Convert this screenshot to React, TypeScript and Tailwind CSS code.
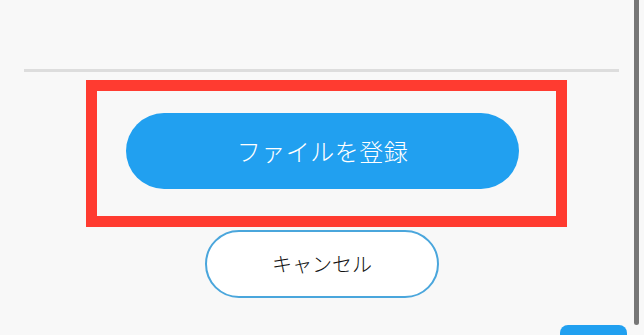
export default function App() {
  return (
    <div
      className="relative w-[644px] h-[335px] overflow-hidden bg-[#f8f8f8]"
      style={{ fontFamily: '"Noto Sans CJK JP", "Noto Sans", sans-serif' }}
    >
      <div className="flex flex-col pt-[69px]">
        <div className="ml-[24px] w-[595px] h-[3px] bg-[#dddddd]" />

        <div className="mt-[8px] ml-[86px] w-[481px] h-[147px] border-[11px] border-[#ff3b30] flex justify-center pt-[22px]">
          <button className="ml-[-8px] w-[393px] h-[76px] rounded-full bg-[#21a0f0] text-white text-[24px] font-light tracking-[0.5px] flex items-center justify-center">
            ファイルを登録
          </button>
        </div>

        <div className="mt-[3px] flex justify-center">
          <button className="w-[234px] h-[68px] rounded-full bg-white border-2 border-[#4aa6dc] text-[#111111] text-[20px] font-light flex items-center justify-center">
            キャンセル
          </button>
        </div>
      </div>

      {/* scrollbar thumb */}
      <div className="absolute right-[5px] top-0 w-[5px] h-[325px] rounded-b-full bg-[#777777]" />

      {/* floating button peeking at the bottom */}
      <div className="absolute left-[560px] top-[325px] w-[67px] h-[20px] rounded-t-[8px] bg-[#21a0f0]" />
    </div>
  );
}
